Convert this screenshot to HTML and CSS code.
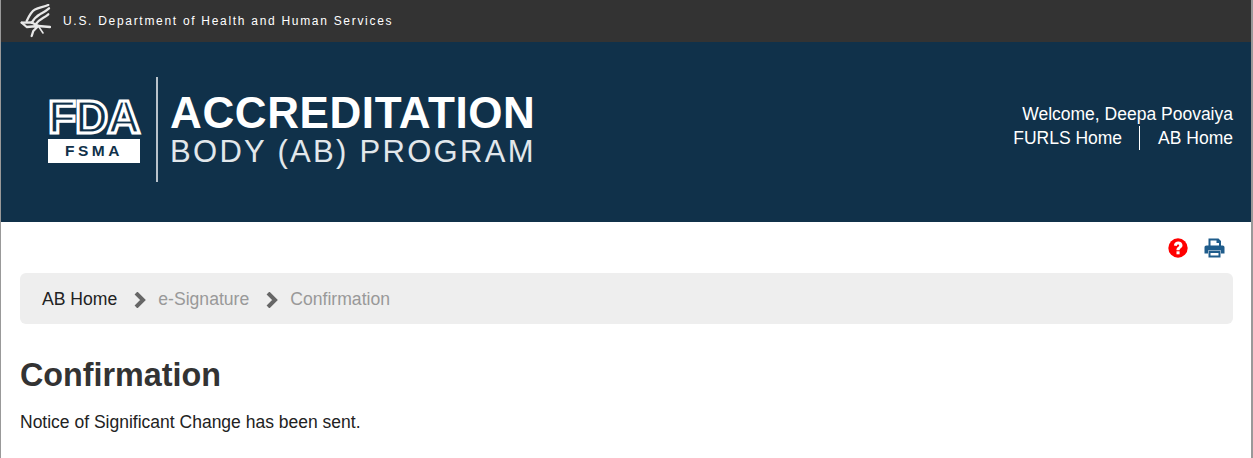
FILE: index.html
```html
<!DOCTYPE html>
<html lang="en">
  <head>
    <meta charset="UTF-8" />
    <title>Confirmation</title>
    <link rel="stylesheet" href="styles.css">
  </head>
  <body>
    <div class="page">
      <div class="hhs-bar">
        <svg class="eagle" width="32" height="34" viewBox="0 0 32 34" fill="none" stroke="#e8e8e8" stroke-linecap="round" stroke-linejoin="round">
          <path d="M7.700 17 C10 12 13 7 16 5.500 C20 3.500 25 3 29.300 1" stroke-width="2.300"/>
          <path d="M12.700 18.700 C15 15 18 12 21 10.300 C24 8.500 27 7 30 4.300" stroke-width="2.300"/>
          <path d="M16 21 C18 18 21 15.500 24.300 13.700 C26 12.800 28 11.500 29.300 10.300" stroke-width="2.300"/>
          <path d="M2.700 18.700 L12.700 18.500 L19.300 22 L31 23" stroke-width="2.300"/>
          <path d="M2.700 18.700 L7.700 23 L19.300 22 L14.300 27 L12.700 32" stroke-width="2.300"/>
          <path d="M19.300 22 L24 29" stroke-width="1.600"/>
        </svg>
        <span class="hhs-name">U.S. Department of Health and Human Services</span>
      </div>

      <header class="banner">
        <div class="logo">
          <div class="fda-mark">
            <div class="fda-letters">FDA</div>
            <div class="fsma-box">FSMA</div>
          </div>
          <div class="program-name">
            <div class="program-top">ACCREDITATION</div>
            <div class="program-sub">BODY (AB) PROGRAM</div>
          </div>
        </div>
        <div class="user-links">
          <div>Welcome, Deepa Poovaiya</div>
          <div class="link-row">
            <a href="#">FURLS Home</a>
            <a href="#">AB Home</a>
          </div>
        </div>
      </header>

      <main class="content">
        <div class="tools">
          <svg width="20" height="20" viewBox="0 0 20 20">
            <circle cx="10" cy="10" r="9.700" fill="#f00"/>
            <path d="M5.900 7.600 C6.100 4.800 8 3.500 10.300 3.500 C12.700 3.500 14.500 5 14.500 7.200 C14.500 10.100 11.600 10.200 11.600 12.200 L8.500 12.200 C8.200 9.200 11.200 9 11.200 7.500 C11.200 6.800 10.800 6.400 10.100 6.400 C9.300 6.400 8.900 6.900 8.800 7.900 Z" fill="#fff"/>
            <rect x="8.500" y="13.300" width="3.100" height="3" fill="#fff"/>
          </svg>
          <svg width="21" height="20" viewBox="0 0 21 20" fill="#1f5c8b">
            <path d="M4.500 0.500 H14.500 L17 3 V9 H15 V5 H12.500 V2.500 H6.500 V9 H4.500 Z"/>
            <path d="M2.500 7.500 H18.500 C19.800 7.500 20.500 8.300 20.500 9.500 V15.500 H17 V12.500 H4 V15.500 H0.500 V9.500 C0.500 8.300 1.200 7.500 2.500 7.500 Z"/>
            <path d="M4.500 13 H16.500 V19.500 H4.500 Z M6.500 15 V17.500 H14.500 V15 Z" fill-rule="evenodd"/>
          </svg>
        </div>

        <nav class="crumbs">
          <a href="#" class="crumb-link">AB Home</a>
          <svg class="chevron" width="13" height="16" viewBox="0 0 13 16"><path d="M3 1 L10 8 L3 15" fill="none" stroke="#666" stroke-width="4"/></svg>
          <span class="crumb-off">e-Signature</span>
          <svg class="chevron" width="13" height="16" viewBox="0 0 13 16"><path d="M3 1 L10 8 L3 15" fill="none" stroke="#666" stroke-width="4"/></svg>
          <span class="crumb-off">Confirmation</span>
        </nav>

        <h1>Confirmation</h1>
        <p>Notice of Significant Change has been sent.</p>
      </main>
    </div>
  </body>
</html>
```

FILE: styles.css
```css
html, body {
  margin: 0;
  height: 100%;
  background-color: #fff;
}

body {
  font-family: "Liberation Sans", Arial, sans-serif;
  color: #222;
  overflow: hidden;
}

.page {
  min-height: 100%;
  box-sizing: border-box;
  border-left: 1px solid #999;
  border-right: 2px solid #999;
}

.hhs-bar {
  display: flex;
  align-items: center;
  height: 42px;
  padding-left: 18px;
  background-color: #333;
}

.eagle {
  margin-right: 12px;
}

.hhs-name {
  color: #fff;
  font-size: 12px;
  letter-spacing: 1.7px;
}

.banner {
  display: flex;
  justify-content: space-between;
  align-items: center;
  height: 180px;
  padding: 0 18px 0 46px;
  background-color: #10314a;
  color: #fff;
}

.logo {
  display: flex;
  align-items: center;
  margin-top: -5px;
}

.fda-mark {
  display: flex;
  flex-direction: column;
  justify-content: center;
  box-sizing: border-box;
  width: 111px;
  height: 105px;
  padding: 2px 0 0 1px;
  border-right: 2px solid #b9c3cb;
  margin-right: 12px;
}

.fda-letters {
  height: 41px;
  font-size: 46px;
  font-weight: bold;
  line-height: 38px;
  letter-spacing: -1px;
  color: transparent;
  -webkit-text-stroke: 3px #fff;
}

.fsma-box {
  width: 92px;
  height: 24px;
  background-color: #fff;
  color: #10314a;
  font-size: 15.500px;
  font-weight: bold;
  line-height: 24px;
  letter-spacing: 3.500px;
  text-align: center;
}

.program-name {
  padding-top: 5px;
}

.program-top {
  font-size: 44px;
  font-weight: bold;
  line-height: 38px;
  letter-spacing: 0.600px;
}

.program-sub {
  margin-top: 2px;
  font-size: 31px;
  line-height: 36px;
  letter-spacing: 2.300px;
  color: #e2e7eb;
}

.user-links {
  font-size: 17.500px;
  line-height: 24px;
  text-align: right;
  margin-top: -12px;
}

.link-row {
  display: flex;
  justify-content: flex-end;
}

.link-row a {
  color: #fff;
  text-decoration: none;
}

.link-row a + a {
  margin-left: 17px;
  padding-left: 18px;
  border-left: 1px solid #fff;
}

.content {
  padding: 0 18px 0 19px;
}

.tools {
  display: flex;
  justify-content: flex-end;
  align-items: center;
  gap: 16px;
  height: 51px;
  padding-right: 8px;
}

.crumbs {
  display: flex;
  align-items: center;
  box-sizing: border-box;
  height: 51px;
  padding: 2px 0 0 22px;
  border-radius: 6px;
  background-color: #eee;
  font-size: 17.600px;
}

.crumb-link {
  color: #222;
  text-decoration: none;
}

.crumb-off {
  color: #999;
}

.chevron {
  margin: 0 12px 0 16px;
}

h1 {
  margin: 30px 0 0;
  font-size: 32.300px;
  line-height: 42px;
  color: #333;
}

p {
  margin: 14px 0 0;
  font-size: 17.500px;
  line-height: 24px;
}
```
